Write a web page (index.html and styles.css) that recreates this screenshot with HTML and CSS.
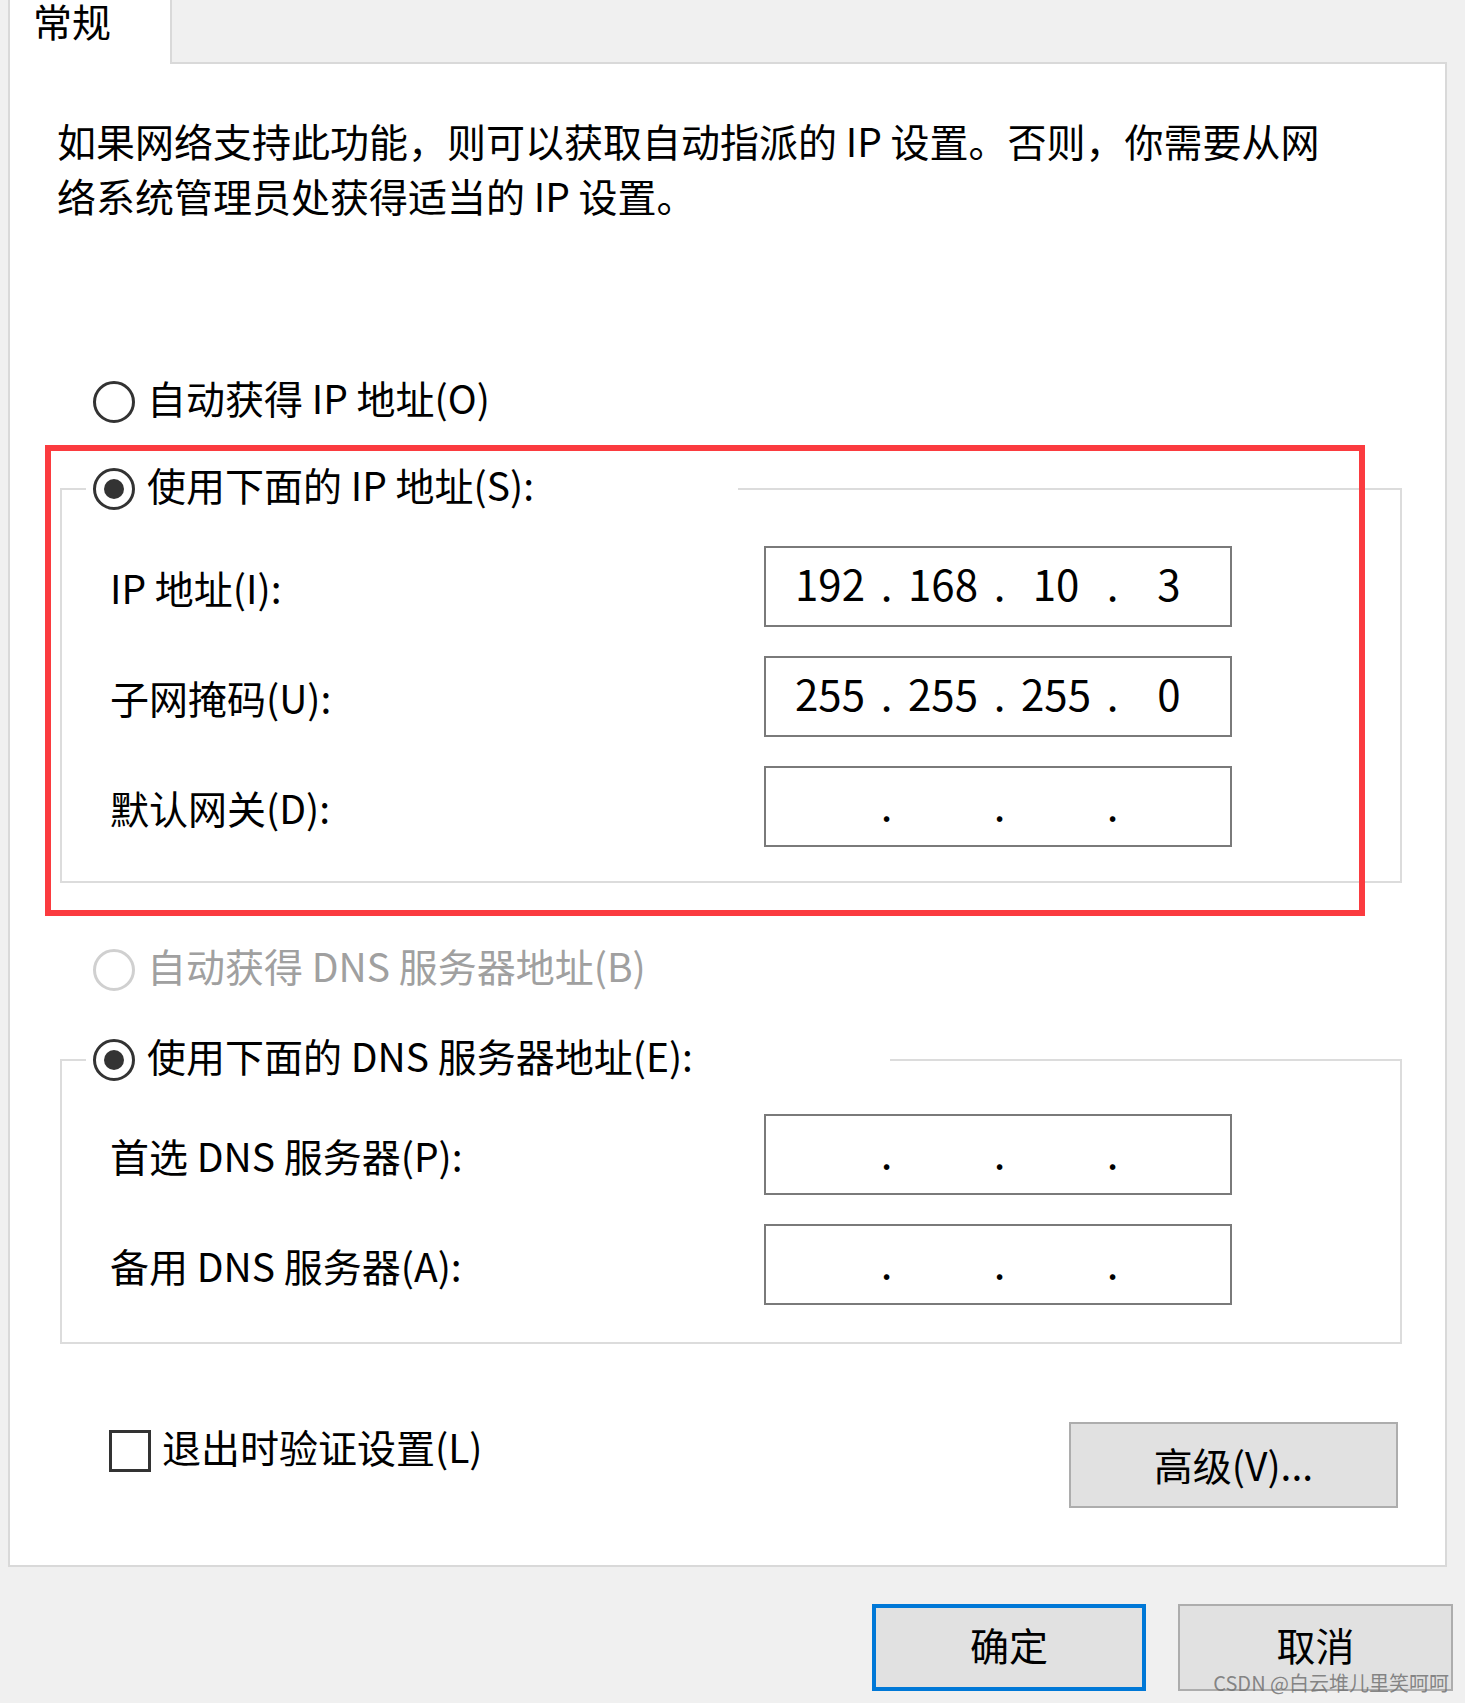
FILE: index.html
```html
<!DOCTYPE html>
<html lang="zh-CN">
<head>
<meta charset="utf-8">
<title>Internet 协议版本 4 (TCP/IPv4) 属性</title>
<link rel="stylesheet" href="styles.css">
</head>
<body>
  <div class="tabs">
    <div class="tab">常规</div>
  </div>
  <div class="panel">
    <p class="intro">如果网络支持此功能，则可以获取自动指派的 IP 设置。否则，你需要从网<br>络系统管理员处获得适当的 IP 设置。</p>

    <div class="radio-row">
      <span class="radio"></span>
      <span class="txt">自动获得 IP 地址(O)</span>
    </div>

    <div class="group group-ip">
      <div class="legend legend-ip">
        <span class="radio checked"></span>
        <span class="txt">使用下面的 IP 地址(S):</span>
      </div>
      <div class="field-row">
        <span class="label">IP 地址(I):</span>
        <div class="ipbox">
          <span class="oct">192</span><span class="dot">.</span><span class="oct">168</span><span class="dot">.</span><span class="oct">10</span><span class="dot">.</span><span class="oct">3</span>
        </div>
      </div>
      <div class="field-row">
        <span class="label">子网掩码(U):</span>
        <div class="ipbox">
          <span class="oct">255</span><span class="dot">.</span><span class="oct">255</span><span class="dot">.</span><span class="oct">255</span><span class="dot">.</span><span class="oct">0</span>
        </div>
      </div>
      <div class="field-row">
        <span class="label">默认网关(D):</span>
        <div class="ipbox">
          <span class="oct"></span><span class="dot">.</span><span class="oct"></span><span class="dot">.</span><span class="oct"></span><span class="dot">.</span><span class="oct"></span>
        </div>
      </div>
    </div>

    <div class="radio-row disabled">
      <span class="radio"></span>
      <span class="txt">自动获得 DNS 服务器地址(B)</span>
    </div>

    <div class="group group-dns">
      <div class="legend legend-dns">
        <span class="radio checked"></span>
        <span class="txt">使用下面的 DNS 服务器地址(E):</span>
      </div>
      <div class="field-row">
        <span class="label">首选 DNS 服务器(P):</span>
        <div class="ipbox">
          <span class="oct"></span><span class="dot">.</span><span class="oct"></span><span class="dot">.</span><span class="oct"></span><span class="dot">.</span><span class="oct"></span>
        </div>
      </div>
      <div class="field-row">
        <span class="label">备用 DNS 服务器(A):</span>
        <div class="ipbox">
          <span class="oct"></span><span class="dot">.</span><span class="oct"></span><span class="dot">.</span><span class="oct"></span><span class="dot">.</span><span class="oct"></span>
        </div>
      </div>
    </div>

    <div class="bottom-row">
      <div class="check-row">
        <span class="checkbox"></span>
        <span class="txt">退出时验证设置(L)</span>
      </div>
      <div class="btn btn-adv">高级(V)...</div>
    </div>
  </div>

  <div class="actions">
    <div class="btn btn-ok">确定</div>
    <div class="btn btn-cancel">取消</div>
  </div>

  <div class="annot"></div>
  <div class="watermark">CSDN @白云堆儿里笑呵呵</div>
</body>
</html>
```

FILE: styles.css
```css
html, body {
  margin: 0;
  padding: 0;
}

body {
  position: relative;
  width: 1465px;
  height: 1703px;
  overflow: hidden;
  background: #f0f0f0;
  color: #000;
  font-family: "Noto Sans CJK SC", "Noto Sans", sans-serif;
  font-size: 39px;
}

/* ---------- tab strip ---------- */
.tabs {
  height: 62px;
  display: flex;
  padding-left: 8px;
}

.tab {
  position: relative;
  z-index: 1;
  width: 164px;
  height: 64px;
  box-sizing: border-box;
  background: #fff;
  border-left: 2px solid #d9d9d9;
  border-right: 2px solid #d9d9d9;
  padding-left: 23px;
  padding-top: 1px;
  line-height: 39px;
}

/* ---------- main panel ---------- */
.panel {
  margin-left: 8px;
  width: 1439px;
  height: 1505px;
  box-sizing: border-box;
  border: 2px solid #d9d9d9;
  background: #fff;
}

.intro {
  margin: 49px 0 0 47px;
  line-height: 55px;
}

.txt {
  padding-bottom: 10px;
}

.radio-row {
  display: flex;
  align-items: center;
  gap: 12px;
  height: 56px;
  margin: 151px 0 0 83px;
}

.radio-row.disabled {
  margin-top: 59px;
  color: #a0a0a0;
}

.radio {
  width: 42px;
  height: 42px;
  box-sizing: border-box;
  border: 3px solid #333;
  border-radius: 50%;
  display: flex;
  align-items: center;
  justify-content: center;
  flex: none;
  background: #fff;
}

.radio.checked::after {
  content: "";
  width: 20px;
  height: 20px;
  border-radius: 50%;
  background: #333;
}

.radio-row.disabled .radio {
  border-color: #d0d0d0;
}

/* ---------- group boxes ---------- */
.group {
  margin-left: 50px;
  width: 1342px;
  box-sizing: border-box;
  border: 2px solid #dcdcdc;
  padding: 0 168px 34px 48px;
}

.group-ip {
  margin-top: 58px;
}

.group-dns {
  margin-top: 61px;
  padding-bottom: 37px;
}

.legend {
  display: flex;
  align-items: center;
  gap: 12px;
  height: 56px;
  margin: -29px 0 0 -24px;
  padding-left: 7px;
  box-sizing: border-box;
  background: #fff;
}

.legend-ip {
  width: 652px;
}

.legend-dns {
  width: 804px;
}

.field-row {
  display: flex;
  align-items: center;
  height: 81px;
  margin-top: 29px;
}

.group-dns .legend + .field-row {
  margin-top: 26px;
}

.label {
  flex: 1;
}

.ipbox {
  width: 468px;
  height: 81px;
  box-sizing: border-box;
  border: 2px solid #7a7a7a;
  display: flex;
  align-items: center;
  padding-left: 19px;
  padding-bottom: 8px;
  font-size: 42px;
  line-height: 50px;
}

.oct {
  width: 90px;
  text-align: center;
}

.dot {
  width: 23px;
  text-align: center;
}

/* ---------- bottom of panel ---------- */
.bottom-row {
  display: flex;
  justify-content: space-between;
  align-items: flex-start;
  margin-top: 78px;
  padding: 0 47px 0 99px;
}

.check-row {
  display: flex;
  align-items: center;
  gap: 11px;
  margin-top: -4px;
}

.checkbox {
  width: 42px;
  height: 42px;
  box-sizing: border-box;
  border: 3px solid #333;
  background: #fff;
}

.btn {
  display: flex;
  align-items: center;
  justify-content: center;
  box-sizing: border-box;
  background: #e1e1e1;
  border: 2px solid #adadad;
}

.btn-adv {
  width: 329px;
  height: 86px;
  padding-bottom: 2px;
}

/* ---------- dialog buttons ---------- */
.actions {
  display: flex;
  justify-content: flex-end;
  gap: 32px;
  margin-top: 37px;
  padding-right: 12px;
}

.btn-ok {
  width: 274px;
  height: 87px;
  border: 4px solid #0078d7;
  padding-bottom: 8px;
}

.btn-cancel {
  width: 275px;
  height: 87px;
  padding-bottom: 8px;
}

/* ---------- overlays ---------- */
.annot {
  position: absolute;
  left: 45px;
  top: 445px;
  width: 1320px;
  height: 471px;
  box-sizing: border-box;
  border: 6px solid #fb3b3f;
}

.watermark {
  position: absolute;
  right: 16px;
  bottom: 9px;
  font-size: 20px;
  line-height: 22px;
  color: rgba(115, 115, 115, 0.85);
}
```
